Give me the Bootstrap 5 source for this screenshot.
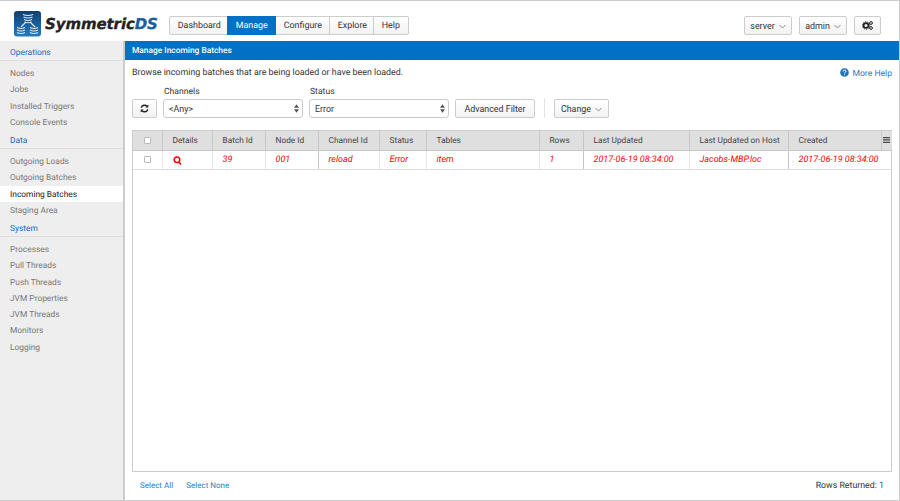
<!DOCTYPE html>
<html>

<head>
  <meta charset="utf-8">
  <meta name="viewport" content="width=device-width">
  <title>SymmetricDS | Manage Incoming Batches</title>
  <link href="https://cdn.jsdelivr.net/npm/bootstrap@5.3.2/dist/css/bootstrap.min.css" rel="stylesheet" type="text/css" />
  <script src="https://cdn.jsdelivr.net/npm/bootstrap@5.3.2/dist/js/bootstrap.bundle.min.js"></script>
  <style>
    html, body { height: 100%; }
    body {
      font-family: Roboto, "Liberation Sans", sans-serif;
      font-size: 8.9px;
      color: #333;
      background: #fff;
      overflow: hidden;
      text-rendering: geometricPrecision;
    }
    .app-shell { height: 501px; border-top: 1px solid #ccc; border-right: 1px solid #ccc; border-bottom: 1px solid #ccc; }
    .top-bar { height: 40px; padding: 9px 18px 0 14px; flex-shrink: 0; }
    .logo-mark { margin-top: -3px; }
    .logo-text { font-family: "DejaVu Sans", sans-serif; font-weight: 700; font-style: italic; font-size: 15px; letter-spacing: -.1px; color: #222; margin: -2px 0 0 3px; -webkit-text-stroke: .3px #222; }
    .logo-text span { color: #1b5f9e; -webkit-text-stroke: .3px #1b5f9e; }
    .main-nav { margin-left: 11px; }
    .main-nav .btn, .tool-btn {
      font-size: 8.9px;
      line-height: 12px;
      height: 19px;
      padding: 3px 8px;
      color: #333;
      border-color: #ccc;
      border-radius: 2px;
      background: linear-gradient(#fff, #f2f2f2);
    }
    .main-nav .btn.active { background: #0071c5; border-color: #0071c5; color: #fff; }
    .main-nav .btn { width: var(--w); }
    .user-tools { gap: 7px; }
    .user-btn { height: 19px; padding: 3px 0; text-align: center; }
    .caret { width: 7px; height: 5px; margin-left: 4px; vertical-align: 0; }
    .side-bar { width: 125px; background: #eee; border-right: 2px solid #ccc; flex-shrink: 0; padding-top: 1px; }
    .side-head { font-size: 8.4px; color: #0e6bc2; height: 19px; line-height: 22px; padding-left: 10px; border-bottom: 1px solid #ddd; margin-bottom: 4px; }
    .side-link { display: block; height: 16.25px; line-height: 18px; padding-left: 10px; font-size: 8.4px; color: #777; text-decoration: none; }
    .side-link.active { background: #fff; color: #222; }
    .panel-head { height: 19px; line-height: 20px; background: #0071c5; color: #fff; font-size: 8.4px; font-weight: 500; padding-left: 7px; }
    .intro { padding: 8px 7px 0; height: 22px; line-height: 10px; }
    .help-link { color: #2f7cc5; text-decoration: none; font-size: 8.6px; }
    .filter-row { padding: 3px 7px 0; height: 48px; }
    .filter-label { display: block; font-size: 8.6px; line-height: 11px; margin: 2px 0 1px 1px; color: #333; }
    .filter-select {
      width: 140px;
      height: 19px;
      font-size: 8.9px;
      line-height: 12px;
      padding: 2px 12px 2px 5px;
      border-color: #ccc;
      border-radius: 3px;
      color: #333;
      background-size: 5px 9px;
      background-position: right 3px center;
      background-image: url("data:image/svg+xml,%3csvg xmlns='http://www.w3.org/2000/svg' viewBox='0 0 6 10'%3e%3cpath fill='%23555' d='M3 0l3 4H0zM3 10L0 6h6z'/%3e%3c/svg%3e");
    }
    .refresh-btn { width: 25px; padding: 3px 0; }
    .filter-sep { width: 1px; height: 20px; background: #e4e4e4; margin: 13px 9px 0 9px; }
    .grid-box { margin: 0 7px; border: 1px solid #ccc; flex-grow: 1; min-height: 0; position: relative; }
    .batch-grid { table-layout: fixed; width: 759px; margin: 0; font-size: 8.3px; --bs-table-bg: transparent; }
    .batch-grid th {
      height: 19px;
      background: #dfdfdf;
      font-weight: 400;
      color: #444;
      padding: 1px 0 0 10px;
      vertical-align: middle;
      border-bottom: 1px solid #c8c8c8;
      border-right: 1px solid #c8c8c8;
      white-space: nowrap;
    }
    .batch-grid td {
      height: 19px;
      color: #f00;
      font-style: italic;
      font-size: 9px;
      padding: 2px 0 0 10px;
      vertical-align: middle;
      border-bottom: 1px solid #ddd;
      border-right: 1px solid #e6e6e6;
      white-space: nowrap;
      overflow: hidden;
    }
    .batch-grid .heavy-edge { border-right-color: #c4c4c4; }
    .batch-grid th:last-child { border-right: 0; padding: 0; text-align: center; }
    .batch-grid td:last-child { border-right: 0; }
    .check-box { display: block; width: 7px; height: 7px; margin: 0 auto; border: 1px solid #bbb; border-radius: 1px; background: #fff; }
    .batch-grid .check-cell { padding: 0; }
    .foot-row { height: 28px; padding: 1px 15px 0 15px; flex-shrink: 0; font-size: 8.8px; }
    .foot-link { color: #2f7cc5; font-size: 8px; text-decoration: none; margin-right: 11px; }
  </style>
</head>

<body>
  <div class="app-shell d-flex flex-column">
    <header class="top-bar d-flex align-items-center">
      <svg class="logo-mark" width="28" height="26" viewBox="0 0 28 26">
        <defs>
          <linearGradient id="logoFill" x1="0" y1="0" x2="0" y2="1">
            <stop offset="0" stop-color="#123f6e" />
            <stop offset="1" stop-color="#1f7cc6" />
          </linearGradient>
        </defs>
        <rect width="27" height="25.5" rx="3" fill="url(#logoFill)" />
        <g fill="none" stroke="#dcebf7" stroke-width="1.1">
          <path d="M9 3.5q5 2 10 0M9.5 6q4.500 2 9 0M10 8.500q4 2 8 0M10.500 11q3.500 1.500 7 0" />
          <path d="M12 11l-5 5M16 11l5 5" />
          <path d="M3 16.500q4 2 8 0M3 19q4 2 8 0M3 21.500q4 2 8 0M16 16.500q4 2 8 0M16 19q4 2 8 0M16 21.500q4 2 8 0" />
        </g>
      </svg>
      <span class="logo-text">Symmetric<span>DS</span></span>
      <div class="btn-group main-nav">
        <a class="btn" style="--w:59px" href="#">Dashboard</a>
        <a class="btn active" style="--w:49px" href="#">Manage</a>
        <a class="btn" style="--w:55px" href="#">Configure</a>
        <a class="btn" style="--w:45px" href="#">Explore</a>
        <a class="btn" style="--w:36px" href="#">Help</a>
      </div>
      <div class="ms-auto d-flex user-tools">
        <button class="btn tool-btn user-btn" style="width:48px">server<svg class="caret" viewBox="0 0 7 5"><path d="M.5 1l3 3 3-3" fill="none" stroke="#888" /></svg></button>
        <button class="btn tool-btn user-btn" style="width:48px">admin<svg class="caret" viewBox="0 0 7 5"><path d="M.5 1l3 3 3-3" fill="none" stroke="#888" /></svg></button>
        <button class="btn tool-btn user-btn" style="width:27px">
          <svg width="11" height="9" viewBox="0 0 11 9" class="d-block mx-auto">
            <circle cx="4" cy="4.500" r="2.400" fill="none" stroke="#222" stroke-width="1.600" />
            <circle cx="4" cy="4.500" r="3.700" fill="none" stroke="#222" stroke-width="1" stroke-dasharray="1.200 1.100" />
            <circle cx="9" cy="2" r="1.400" fill="none" stroke="#222" stroke-width="1" />
            <circle cx="9" cy="7" r="1.400" fill="none" stroke="#222" stroke-width="1" />
          </svg>
        </button>
      </div>
    </header>

    <div class="d-flex flex-grow-1" style="min-height:0">
      <nav class="side-bar">
        <div class="side-head">Operations</div>
        <a class="side-link" href="#">Nodes</a>
        <a class="side-link" href="#">Jobs</a>
        <a class="side-link" href="#">Installed Triggers</a>
        <a class="side-link" href="#">Console Events</a>
        <div class="side-head">Data</div>
        <a class="side-link" href="#">Outgoing Loads</a>
        <a class="side-link" href="#">Outgoing Batches</a>
        <a class="side-link active" href="#">Incoming Batches</a>
        <a class="side-link" href="#">Staging Area</a>
        <div class="side-head">System</div>
        <a class="side-link" href="#">Processes</a>
        <a class="side-link" href="#">Pull Threads</a>
        <a class="side-link" href="#">Push Threads</a>
        <a class="side-link" href="#">JVM Properties</a>
        <a class="side-link" href="#">JVM Threads</a>
        <a class="side-link" href="#">Monitors</a>
        <a class="side-link" href="#">Logging</a>
      </nav>

      <main class="flex-grow-1 d-flex flex-column" style="min-width:0">
        <div class="panel-head">Manage Incoming Batches</div>
        <div class="intro d-flex justify-content-between">
          <span>Browse incoming batches that are being loaded or have been loaded.</span>
          <a class="help-link" href="#">
            <svg width="9" height="9" viewBox="0 0 9 9" style="vertical-align:-1px;margin-right:1px">
              <circle cx="4.500" cy="4.500" r="4.300" fill="#1d75bd" />
              <path d="M3 3.500q.1-1.500 1.500-1.500t1.500 1.300q0 .8-1 1.200-.5.2-.5.8" fill="none" stroke="#fff" stroke-width="1" />
              <rect x="4" y="6.300" width="1" height="1" fill="#fff" />
            </svg>
            More Help
          </a>
        </div>
        <div class="filter-row d-flex align-items-start">
          <button class="btn tool-btn refresh-btn" style="margin-top:14px">
            <svg width="9" height="9" viewBox="0 0 9 9" class="d-block mx-auto">
              <path d="M1.200 3.600A3.400 3.400 0 0 1 7 2.300M7.800 5.400A3.400 3.400 0 0 1 2 6.700" fill="none" stroke="#222" stroke-width="1.500" />
              <path d="M8.300.5v3H5.300zM.7 8.500v-3h3z" fill="#222" />
            </svg>
          </button>
          <div style="margin-left:6px">
            <label class="filter-label" for="channelSel">Channels</label>
            <select id="channelSel" class="form-select filter-select"><option>&lt;Any&gt;</option></select>
          </div>
          <div style="margin-left:6px">
            <label class="filter-label" for="statusSel">Status</label>
            <select id="statusSel" class="form-select filter-select"><option>Error</option></select>
          </div>
          <button class="btn tool-btn" style="margin:14px 0 0 6px;width:80px;padding:3px 0">Advanced Filter</button>
          <div class="filter-sep"></div>
          <button class="btn tool-btn" style="margin-top:14px;width:55px;padding:3px 0">Change<svg class="caret" viewBox="0 0 7 5"><path d="M.5 1l3 3 3-3" fill="none" stroke="#888" /></svg></button>
        </div>
        <div class="grid-box">
          <table class="table batch-grid">
            <colgroup>
              <col style="width:29px"><col style="width:50px"><col style="width:53px"><col style="width:53px">
              <col style="width:61px"><col style="width:47px"><col style="width:113px"><col style="width:44px">
              <col style="width:106px"><col style="width:99px"><col style="width:93px"><col style="width:11px">
            </colgroup>
            <thead>
              <tr>
                <th class="check-cell"><span class="check-box"></span></th>
                <th>Details</th>
                <th>Batch Id</th>
                <th class="heavy-edge">Node Id</th>
                <th>Channel Id</th>
                <th>Status</th>
                <th>Tables</th>
                <th class="heavy-edge">Rows</th>
                <th>Last Updated</th>
                <th class="heavy-edge">Last Updated on Host</th>
                <th>Created</th>
                <th>
                  <svg width="7" height="6" viewBox="0 0 7 6" class="d-block mx-auto"><path d="M0 0h7v1.300H0zM0 2.300h7v1.300H0zM0 4.700h7V6H0z" fill="#444" /></svg>
                </th>
              </tr>
            </thead>
            <tbody>
              <tr>
                <td class="check-cell"><span class="check-box"></span></td>
                <td>
                  <svg width="9" height="9" viewBox="0 0 9 9" class="d-block">
                    <circle cx="4" cy="3.800" r="2.800" fill="none" stroke="#f00" stroke-width="1.500" />
                    <path d="M5.700 6l2.300 2.500" stroke="#f00" stroke-width="1.600" />
                  </svg>
                </td>
                <td>39</td>
                <td class="heavy-edge">001</td>
                <td>reload</td>
                <td>Error</td>
                <td>item</td>
                <td class="heavy-edge">1</td>
                <td>2017-06-19 08:34:00</td>
                <td class="heavy-edge">Jacobs-MBP.loc</td>
                <td colspan="2">2017-06-19 08:34:00</td>
              </tr>
            </tbody>
          </table>
        </div>
        <div class="foot-row d-flex align-items-center justify-content-between">
          <div>
            <a class="foot-link" href="#">Select All</a>
            <a class="foot-link" href="#">Select None</a>
          </div>
          <span>Rows Returned: <span style="color:#1d5fa5">1</span></span>
        </div>
      </main>
    </div>
  </div>
</body>

</html>
